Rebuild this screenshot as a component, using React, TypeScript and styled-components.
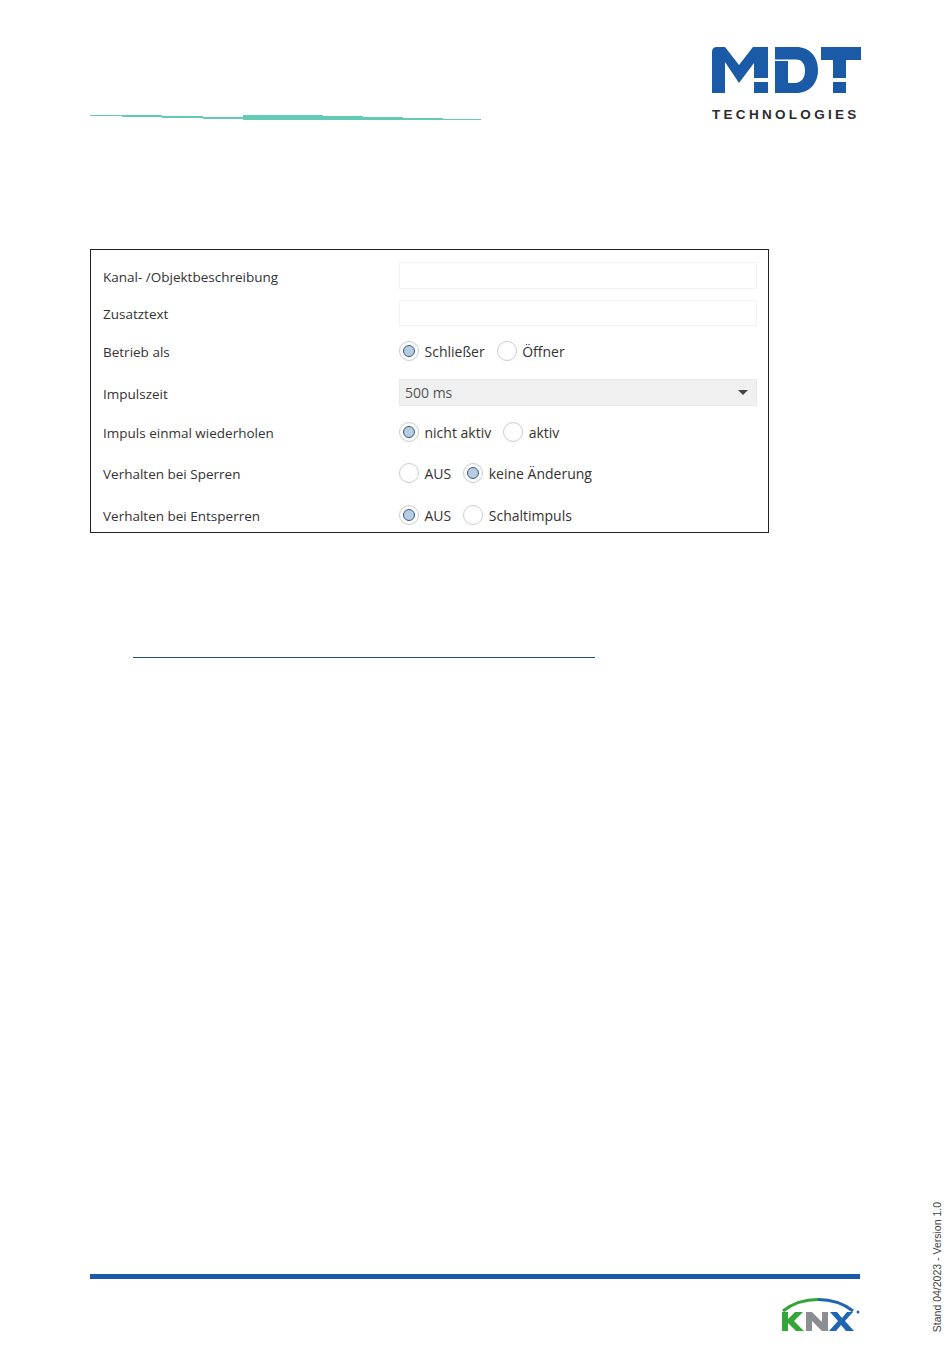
import React from 'react';
import styled, { createGlobalStyle } from 'styled-components';

const GlobalStyle = createGlobalStyle`
    html, body {
        margin: 0;
        padding: 0;
        background: #fff;
    }
`;

const Sheet = styled.div`
    box-sizing: border-box;
    width: 950px;
    height: 1369px;
    padding: 47px 90px 0;
    display: flex;
    flex-direction: column;
    position: relative;
    overflow: hidden;
    font-family: "Open Sans", "Noto Sans", sans-serif;
    color: #333;
`;

const Header = styled.header`
    display: flex;
    justify-content: space-between;
    align-items: flex-start;
    height: 202px;
`;

const HeadingRule = styled.svg`
    display: block;
    margin-top: 68px;
`;

const Logo = styled.div`
    width: 149px;
    margin-right: -1px;
`;

const LogoMark = styled.svg`
    display: block;
`;

const LogoCaption = styled.div`
    margin-top: 14px;
    font-family: "Liberation Sans", sans-serif;
    font-size: 13.5px;
    font-weight: 700;
    line-height: 14px;
    letter-spacing: 3.3px;
    color: #2b2b2b;
    white-space: nowrap;
`;

const Panel = styled.section`
    box-sizing: border-box;
    width: 679px;
    height: 284px;
    border: 1px solid #222;
    padding: 12px 11px 0 12px;
    display: flex;
    flex-direction: column;
`;

const Row = styled.div<{ $gap?: number }>`
    display: grid;
    grid-template-columns: 296px 358px;
    align-items: center;
    margin-top: ${(p) => p.$gap ?? 0}px;
`;

const Label = styled.div`
    font-size: 13.5px;
    line-height: 18px;
    padding-top: 2px;
`;

const TextBox = styled.div<{ $height: number }>`
    box-sizing: border-box;
    height: ${(p) => p.$height}px;
    border: 1px solid #f2f2f2;
    background: #fff;
`;

const Select = styled.div`
    box-sizing: border-box;
    height: 27px;
    padding: 0 8px 0 5px;
    display: flex;
    align-items: center;
    justify-content: space-between;
    background: #f0f0f0;
    border: 1px solid #e8e8e8;
    font-size: 14px;
    color: #555;
`;

const Caret = styled.span`
    width: 0;
    height: 0;
    border-left: 5px solid transparent;
    border-right: 5px solid transparent;
    border-top: 5px solid #444;
`;

const RadioGroup = styled.div`
    display: flex;
    align-items: center;
    gap: 12px;
`;

const RadioItem = styled.div`
    display: flex;
    align-items: center;
    gap: 5.5px;
    font-size: 14px;
`;

const RadioText = styled.span`
    line-height: 19px;
    padding-top: 1px;
`;

const RadioCircle = styled.span<{ $checked?: boolean }>`
    box-sizing: border-box;
    width: 20px;
    height: 20px;
    border-radius: 50%;
    border: 1px solid #ccc;
    display: flex;
    align-items: center;
    justify-content: center;

    &::after {
        content: '';
        display: ${(p) => (p.$checked ? 'block' : 'none')};
        box-sizing: border-box;
        width: 12px;
        height: 12px;
        border-radius: 50%;
        background: #b8cce0;
        border: 1.5px solid #2f5a8e;
    }
`;

const SubRule = styled.div`
    width: 462px;
    height: 1px;
    margin: 124px 0 0 43px;
    background: #1f4e8c;
`;

const Footer = styled.footer`
    margin-top: auto;
    padding-bottom: 35px;
    display: flex;
    flex-direction: column;
    align-items: flex-end;
`;

const FooterBar = styled.div`
    width: 100%;
    height: 5px;
    background: #1a5aa6;
    margin-bottom: 19px;
`;

const KnxLogo = styled.svg`
    display: block;
    margin-right: -1px;
`;

const VersionNote = styled.div`
    position: absolute;
    right: 7px;
    bottom: 37px;
    writing-mode: vertical-rl;
    transform: rotate(180deg);
    font-family: "Liberation Sans", sans-serif;
    font-size: 10.5px;
    line-height: 11px;
    color: #444;
    white-space: nowrap;
`;

// x, top, width, height of each step of the heading underline
const ruleSteps = [
    [0, 0, 32, 1],
    [32, 0, 40, 2],
    [72, 1, 41, 2],
    [113, 2, 40, 2],
    [153, 0, 80, 5],
    [233, 1, 40, 4],
    [273, 2, 40, 3],
    [313, 3, 40, 2],
    [353, 4, 38, 1]
];

type Option = { label: string; checked?: boolean };

const RadioRow: React.FC<{ label: string; options: Option[]; gap: number }> = ({
    label,
    options,
    gap
}) => (
    <Row $gap={gap}>
        <Label>{label}</Label>
        <RadioGroup>
            {options.map((o) => (
                <RadioItem key={o.label}>
                    <RadioCircle $checked={o.checked} />
                    <RadioText>{o.label}</RadioText>
                </RadioItem>
            ))}
        </RadioGroup>
    </Row>
);

const MdtMark = () => (
    <LogoMark width="149" height="47" viewBox="0 0 149 47">
        <path
            fill="#1a5aa6"
            fillRule="evenodd"
            d="M0 46V5Q0 0 5 0H13L27 18 41 0H56V31H42V16L27 36 13 15V46Z
               M42 35H56V46H42Z
               M63 0H84C98 0 106 10 106 23S98 46 84 46H63Z
               M63 12.5H84C90 12.5 93 17 93 24S89 36 83 36H76V14H63Z
               M109 0H149V13H134V31H121V13H109Z
               M121 35H134V46H121Z"
        />
    </LogoMark>
);

const KnxMark = () => (
    <KnxLogo width="80" height="36" viewBox="0 0 80 36">
        <path d="M2 13C12 5 24 1.500 37 1.500" fill="none" stroke="#36a537" strokeWidth="3" />
        <path d="M37 1.500C50 1.500 62 5 72 13" fill="none" stroke="#1f65b0" strokeWidth="3" />
        <path fill="#36a537" d="M1 14h6v7l7-7h8l-9 9 10 10h-8l-8-8v8H1z" />
        <path fill="#8b8f92" d="M25 14h6l10 10V14h6v19h-6L31 23v10h-6z" />
        <path fill="#1f65b0" d="M49 14h7l5 6 5-6h6l-8 9 9 10h-8l-5-6-5 6h-7l9-10z" />
        <circle cx="77" cy="14" r="1.500" fill="#1f65b0" />
    </KnxLogo>
);

export default function App() {
    return (
        <Sheet>
            <GlobalStyle />
            <Header>
                <HeadingRule width="391" height="5" viewBox="0 0 391 5">
                    {ruleSteps.map(([x, y, w, h]) => (
                        <rect key={x} x={x} y={y} width={w} height={h} fill="#62cab5" />
                    ))}
                </HeadingRule>
                <Logo>
                    <MdtMark />
                    <LogoCaption>TECHNOLOGIES</LogoCaption>
                </Logo>
            </Header>
            <Panel>
                <Row>
                    <Label>Kanal- /Objektbeschreibung</Label>
                    <TextBox $height={27} />
                </Row>
                <Row $gap={11}>
                    <Label>Zusatztext</Label>
                    <TextBox $height={26} />
                </Row>
                <RadioRow
                    label="Betrieb als"
                    gap={15}
                    options={[{ label: 'Schließer', checked: true }, { label: 'Öffner' }]}
                />
                <Row $gap={18}>
                    <Label>Impulszeit</Label>
                    <Select>
                        500 ms
                        <Caret />
                    </Select>
                </Row>
                <RadioRow
                    label="Impuls einmal wiederholen"
                    gap={16}
                    options={[{ label: 'nicht aktiv', checked: true }, { label: 'aktiv' }]}
                />
                <RadioRow
                    label="Verhalten bei Sperren"
                    gap={21}
                    options={[{ label: 'AUS' }, { label: 'keine Änderung', checked: true }]}
                />
                <RadioRow
                    label="Verhalten bei Entsperren"
                    gap={22}
                    options={[{ label: 'AUS', checked: true }, { label: 'Schaltimpuls' }]}
                />
            </Panel>
            <SubRule />
            <Footer>
                <FooterBar />
                <KnxMark />
            </Footer>
            <VersionNote>Stand 04/2023 - Version 1.0</VersionNote>
        </Sheet>
    );
}
